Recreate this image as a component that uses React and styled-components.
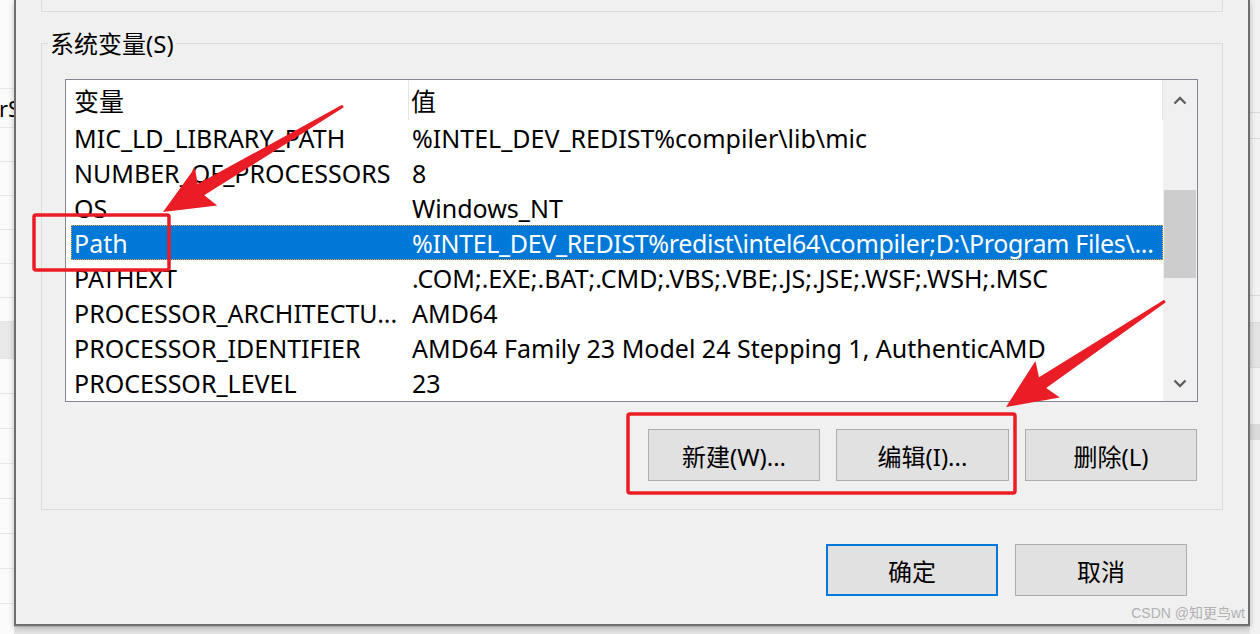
import React from 'react';
import styled, { createGlobalStyle } from 'styled-components';

const GlobalStyle = createGlobalStyle`
  html, body {
    margin: 0;
    padding: 0;
    background: #f3f3f3;
    overflow: hidden;
  }
  body {
    font-family: "Noto Sans", "Noto Sans CJK SC", sans-serif;
    color: #000;
  }
`;

const Screen = styled.div`
  position: relative;
  width: 1260px;
  height: 634px;
  display: flex;
  overflow: hidden;
`;

const LeftStrip = styled.div`
  width: 14px;
  flex: none;
  background: #fbfbfb;
  display: flex;
  flex-direction: column;
  overflow: hidden;
`;

const StripRow = styled.div`
  height: ${(p) => p.h}px;
  flex: none;
  border-bottom: 1px solid #e6e6e6;
  background: ${(p) => (p.grey ? '#e9e9e9' : 'transparent')};
  font-size: 22px;
  line-height: ${(p) => p.h}px;
  text-indent: -1px;
  white-space: nowrap;
`;

const RightStrip = styled.div`
  width: 10px;
  flex: none;
  background: #f2f2f2;
  display: flex;
  flex-direction: column;
`;

const RightRow = styled.div`
  height: ${(p) => p.h}px;
  flex: none;
  border-bottom: 1px solid #dadada;
  background: ${(p) => p.bg || 'transparent'};
`;

const Middle = styled.div`
  width: 1236px;
  flex: none;
  display: flex;
  flex-direction: column;
`;

const Dialog = styled.div`
  position: relative;
  box-sizing: border-box;
  height: 626px;
  background: #f0f0f0;
  border: 2px solid #6e6e6e;
  border-top: none;
  box-shadow: 0 2px 6px rgba(0, 0, 0, 0.25);
  padding: 0 25px;
  display: flex;
  flex-direction: column;
`;

const BottomStrip = styled.div`
  flex: 1;
  background: #e4e4e4;
  border-top: 1px solid #cfcfcf;
`;

const TopGroup = styled.div`
  height: 11px;
  border: 1px solid #dcdcdc;
  border-top: none;
`;

const Group = styled.div`
  margin-top: 31px;
  border: 1px solid #dcdcdc;
  padding: 0 24px 28px 23px;
  display: flex;
  flex-direction: column;
`;

const Legend = styled.div`
  align-self: flex-start;
  margin: -14px 0 0 -17px;
  padding: 0 2px;
  background: #f0f0f0;
  font-size: 24px;
  line-height: 28px;
`;

const ListBox = styled.div`
  margin-top: 21px;
  height: 321px;
  border: 1px solid #828790;
  background: #fff;
  display: flex;
`;

const Rows = styled.div`
  flex: 1;
  min-width: 0;
  padding-left: 5px;
  display: flex;
  flex-direction: column;
  font-size: 25px;
`;

const HeaderRow = styled.div`
  height: 40px;
  display: flex;
  align-items: center;
`;

const Row = styled.div`
  height: 35px;
  box-sizing: border-box;
  display: flex;
  align-items: center;
  white-space: nowrap;
  background: ${(p) => (p.selected ? '#0078d7' : 'transparent')};
  color: ${(p) => (p.selected ? '#fff' : '#000')};
  outline: ${(p) => (p.selected ? '1px dotted #f0a040' : 'none')};
  outline-offset: -1px;
`;

const NameCell = styled.div`
  width: 334px;
  flex: none;
  padding-left: 3px;
  overflow: hidden;
`;

const ValueCell = styled.div`
  flex: 1;
  min-width: 0;
  padding-left: 4px;
  overflow: hidden;
  letter-spacing: ${(p) => (p.tight ? '-0.35px' : 'normal')};
`;

const HeadName = styled(NameCell)`
  align-self: stretch;
  display: flex;
  align-items: center;
  border-right: 1px solid #e5e5e5;
  margin-right: -1px;
`;

const HeadValue = styled(ValueCell)`
  align-self: stretch;
  display: flex;
  align-items: center;
  padding-left: 3px;
  border-right: 1px solid #e5e5e5;
`;

const ScrollBar = styled.div`
  width: 34px;
  flex: none;
  background: #f0f0f0;
  display: flex;
  flex-direction: column;
  align-items: center;
`;

const ScrollArrow = styled.div`
  height: ${(p) => p.h}px;
  display: flex;
  align-items: center;
  justify-content: center;
`;

const Track = styled.div`
  flex: 1;
  align-self: stretch;
  display: flex;
  justify-content: center;
`;

const Thumb = styled.div`
  margin-top: 70px;
  width: 32px;
  height: 88px;
  background: #cdcdcd;
`;

const ButtonRow = styled.div`
  margin-top: 27px;
  display: flex;
  justify-content: flex-end;
  gap: ${(p) => p.gap}px;
  padding-right: ${(p) => p.pr}px;
`;

const Button = styled.div`
  box-sizing: border-box;
  width: ${(p) => p.w || 172}px;
  height: 52px;
  background: #e1e1e1;
  border: ${(p) => (p.primary ? '2px solid #0078d7' : '1px solid #adadad')};
  display: flex;
  align-items: center;
  justify-content: center;
  font-size: 24px;
`;

const FooterRow = styled(ButtonRow)`
  margin-top: 34px;
`;

const Watermark = styled.div`
  position: absolute;
  right: 3px;
  bottom: 2px;
  font-family: "Liberation Sans", "Noto Sans CJK SC", sans-serif;
  font-size: 14px;
  line-height: 18px;
  color: #b0b0b0;
`;

const Overlay = styled.svg`
  position: absolute;
  left: 0;
  top: 0;
  pointer-events: none;
`;

const rows = [
  ['MIC_LD_LIBRARY_PATH', '%INTEL_DEV_REDIST%compiler\\lib\\mic'],
  ['NUMBER_OF_PROCESSORS', '8'],
  ['OS', 'Windows_NT'],
  ['Path', '%INTEL_DEV_REDIST%redist\\intel64\\compiler;D:\\Program Files\\...'],
  ['PATHEXT', '.COM;.EXE;.BAT;.CMD;.VBS;.VBE;.JS;.JSE;.WSF;.WSH;.MSC'],
  ['PROCESSOR_ARCHITECTU...', 'AMD64'],
  ['PROCESSOR_IDENTIFIER', 'AMD64 Family 23 Model 24 Stepping 1, AuthenticAMD'],
  ['PROCESSOR_LEVEL', '23'],
];

const leftRows = [
  [88], [38, false, 'rS'], [33], [33], [33], [33], [33], [23], [36, true], [34], [34], [34], [34], [34], [34], [34],
];

function arrowPoints(tail, tip, headLen, headW, tailW, neckW) {
  const dx = tip[0] - tail[0];
  const dy = tip[1] - tail[1];
  const len = Math.hypot(dx, dy);
  const ux = dx / len;
  const uy = dy / len;
  const nx = -uy;
  const ny = ux;
  const bx = tip[0] - ux * headLen;
  const by = tip[1] - uy * headLen;
  const wx = bx - ux * 6;
  const wy = by - uy * 6;
  const pts = [
    [tail[0] + nx * tailW / 2, tail[1] + ny * tailW / 2],
    [bx + nx * neckW / 2, by + ny * neckW / 2],
    [wx + nx * headW / 2, wy + ny * headW / 2],
    tip,
    [wx - nx * headW / 2, wy - ny * headW / 2],
    [bx - nx * neckW / 2, by - ny * neckW / 2],
    [tail[0] - nx * tailW / 2, tail[1] - ny * tailW / 2],
  ];
  return pts.map((p) => `${p[0].toFixed(1)},${p[1].toFixed(1)}`).join(' ');
}

const Chevron = ({ up }) => (
  <svg width="14" height="9" viewBox="0 0 14 9">
    <polyline
      points={up ? '1.5,7.5 7,2 12.5,7.5' : '1.5,1.5 7,7 12.5,1.5'}
      fill="none"
      stroke="#606060"
      strokeWidth="2.4"
    />
  </svg>
);

export default function App() {
  return (
    <Screen>
      <GlobalStyle />
      <LeftStrip>
        {leftRows.map(([h, grey, t], i) => (
          <StripRow key={i} h={h} grey={grey}>{t}</StripRow>
        ))}
      </LeftStrip>
      <Middle>
        <Dialog>
          <TopGroup />
          <Group>
            <Legend>系统变量(S)</Legend>
            <ListBox>
              <Rows>
                <HeaderRow>
                  <HeadName>变量</HeadName>
                  <HeadValue>值</HeadValue>
                </HeaderRow>
                {rows.map(([name, value]) => (
                  <Row key={name} selected={name === 'Path'}>
                    <NameCell>{name}</NameCell>
                    <ValueCell tight={name === 'Path'}>{value}</ValueCell>
                  </Row>
                ))}
              </Rows>
              <ScrollBar>
                <ScrollArrow h={40}><Chevron up /></ScrollArrow>
                <Track><Thumb /></Track>
                <ScrollArrow h={36}><Chevron /></ScrollArrow>
              </ScrollBar>
            </ListBox>
            <ButtonRow gap={16} pr={1}>
              <Button w={172}>新建(W)...</Button>
              <Button w={173}>编辑(I)...</Button>
              <Button w={172}>删除(L)</Button>
            </ButtonRow>
          </Group>
          <FooterRow gap={17} pr={36}>
            <Button primary w={172}>确定</Button>
            <Button w={172}>取消</Button>
          </FooterRow>
          <Watermark>CSDN @知更鸟wt</Watermark>
        </Dialog>
        <BottomStrip />
      </Middle>
      <RightStrip>
        <RightRow h={112} />
        <RightRow h={25} />
        <RightRow h={156} />
        <RightRow h={26} />
        <RightRow h={44} bg="#e4e4e4" />
        <RightRow h={56} />
        <RightRow h={14} bg="#dcdcdc" />
      </RightStrip>
      <Overlay width="1260" height="634" viewBox="0 0 1260 634">
        <g fill="#ea1c26">
          <polygon points={arrowPoints([343, 106], [163, 212], 44, 44, 3, 13)} />
          <polygon points={arrowPoints([1165, 301], [1006, 407], 44, 44, 3, 13)} />
        </g>
        <g fill="none" stroke="#ea1c26" strokeWidth="3.5">
          <rect x="34" y="215" width="135" height="55" rx="2" />
          <rect x="628" y="414" width="387" height="79" rx="2" />
        </g>
      </Overlay>
    </Screen>
  );
}
